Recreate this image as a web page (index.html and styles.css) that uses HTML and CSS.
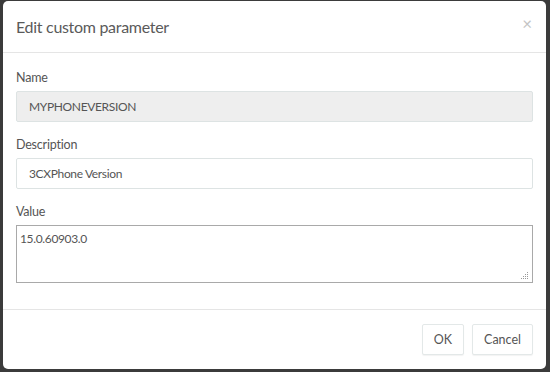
FILE: index.html
```html
<!DOCTYPE html>
<html lang="en">
<head>
<meta charset="utf-8">
<title>Edit custom parameter</title>
<link rel="stylesheet" href="styles.css">
</head>
<body>
<div class="modal">
  <div class="modal-header">
    <h4 class="modal-title">Edit custom parameter</h4>
    <span class="close">&times;</span>
  </div>
  <div class="modal-body">
    <div class="form-group">
      <label for="name">Name</label>
      <input type="text" id="name" class="form-control" value="MYPHONEVERSION" disabled>
    </div>
    <div class="form-group">
      <label for="description">Description</label>
      <input type="text" id="description" class="form-control" value="3CXPhone Version">
    </div>
    <div class="form-group">
      <label for="value">Value</label>
      <div class="area-wrap">
        <textarea id="value" class="value-area">15.0.60903.0</textarea>
        <svg class="grip" width="8" height="8" viewBox="0 0 8 8">
          <rect x="6" y="0" width="1" height="1" fill="#999"/>
          <rect x="4" y="2" width="1" height="1" fill="#999"/>
          <rect x="6" y="2" width="1" height="1" fill="#999"/>
          <rect x="2" y="4" width="1" height="1" fill="#999"/>
          <rect x="4" y="4" width="1" height="1" fill="#999"/>
          <rect x="6" y="4" width="1" height="1" fill="#999"/>
          <rect x="0" y="6" width="1" height="1" fill="#999"/>
          <rect x="2" y="6" width="1" height="1" fill="#999"/>
          <rect x="4" y="6" width="1" height="1" fill="#999"/>
          <rect x="6" y="6" width="1" height="1" fill="#999"/>
        </svg>
      </div>
    </div>
  </div>
  <div class="modal-footer">
    <button type="button" class="btn">OK</button>
    <button type="button" class="btn">Cancel</button>
  </div>
</div>
</body>
</html>
```

FILE: styles.css
```css
body
        {
        margin:0;
        padding:1px 4px 3px 3px;
        background:#3b3b3b;
        font-family:Lato, "Open Sans", sans-serif;
        color:#555;
        font-size:13px;
        }
.modal
        {
        background:#fff;
        border-radius:5px;
        height:368px;
        display:flex;
        flex-direction:column;
        }
.modal-header
        {
        height:51px;
        padding:0 13px;
        border-bottom:1px solid #e5e5e5;
        display:flex;
        align-items:center;
        justify-content:space-between;
        }
.modal-title
        {
        margin:0;
        font-weight:normal;
        font-size:16px;
        letter-spacing:-0.3px;
        color:#5a5a5a;
        }
.close
        {
        color:#c4c4c4;
        font-size:17px;
        line-height:1;
        margin:0 1px 6px 0;
        }
.modal-body
        {
        padding:16px 13px 0 13px;
        flex:1;
        border-bottom:1px solid #e5e5e5;
        }
.form-group
        {
        margin-bottom:14px;
        }
label
        {
        display:block;
        line-height:18px;
        margin-bottom:4px;
        font-size:12.5px;
        letter-spacing:-0.2px;
        }
.form-control
        {
        display:block;
        box-sizing:border-box;
        width:100%;
        height:31px;
        margin:0;
        padding:0 12px;
        border:1px solid #dde3e3;
        border-radius:2px;
        background:#fff;
        font-family:inherit;
        font-size:12px;
        letter-spacing:-0.35px;
        color:#555;
        }
.form-control[disabled]
        {
        background:#eee;
        color:#555;
        }
.area-wrap
        {
        position:relative;
        }
.value-area
        {
        display:block;
        box-sizing:border-box;
        width:100%;
        height:58px;
        margin:0;
        padding:5px 3px;
        border:1px solid #a9a9a9;
        font-family:inherit;
        font-size:12px;
        letter-spacing:-0.35px;
        color:#555;
        resize:none;
        }
.grip
        {
        position:absolute;
        right:4px;
        bottom:3px;
        }
.modal-footer
        {
        padding:14px 13px;
        display:flex;
        justify-content:flex-end;
        gap:8px;
        }
.btn
        {
        height:31px;
        padding:0 11px;
        background:#fff;
        border:1px solid #e3e8e8;
        border-radius:2px;
        box-shadow:0 1px 1px rgba(0,0,0,0.05);
        font-family:inherit;
        font-size:12.5px;
        color:#555;
        }
```
